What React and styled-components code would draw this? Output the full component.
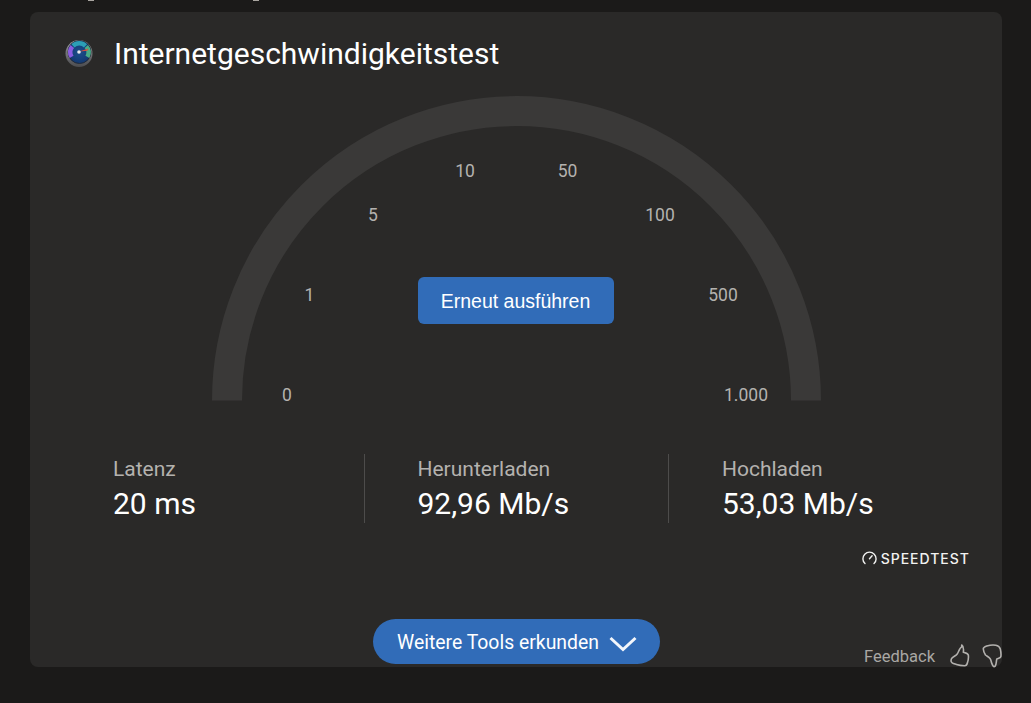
import styled, { createGlobalStyle } from "styled-components";

const GlobalStyle = createGlobalStyle`
  html, body { margin: 0; padding: 0; background: #1b1a19; }
  * { box-sizing: border-box; }
`;

const Page = styled.div`
  position: relative;
  width: 1031px;
  height: 703px;
  overflow: hidden;
  padding: 0 29px 0 30px;
  background: #1b1a19;
  font-family: Roboto, "Liberation Sans", sans-serif;
`;

const TopStrip = styled.div`
  display: flex;
  gap: 159px;
  height: 12px;
  padding-left: 58px;
`;

const Descender = styled.span`
  width: 6px;
  height: 1px;
  background: #a9a5a0;
`;

const Card = styled.section`
  display: flex;
  flex-direction: column;
  height: 655px;
  background: #2a2928;
  border-radius: 8px;
`;

const Header = styled.header`
  display: flex;
  align-items: center;
  gap: 20px;
  height: 84px;
  padding: 0 0 2px 34px;
  flex-shrink: 0;
`;

const Title = styled.h1`
  margin: 0;
  font-size: 30px;
  font-weight: 400;
  color: #fff;
`;

const Gauge = styled.div`
  position: relative;
  align-self: center;
  width: 609px;
  height: 305px;
  flex-shrink: 0;
`;

const Dial = styled.svg`
  display: block;
  width: 609px;
  height: 305px;
`;

const Tick = styled.span`
  position: absolute;
  left: ${(p) => p.$x}px;
  top: ${(p) => p.$y}px;
  transform: translate(-50%, -50%);
  font-size: 17.5px;
  color: #b4b2af;
`;

const RunButton = styled.button`
  position: absolute;
  left: 206px;
  top: 181px;
  width: 196px;
  height: 47px;
  padding: 2px 0 0;
  border: 0;
  border-radius: 6px;
  background: #316cb8;
  color: #fff;
  font-family: "Liberation Sans", Arial, sans-serif;
  font-size: 19.5px;
`;

const Stats = styled.div`
  display: grid;
  grid-template-columns: repeat(3, 304.5px);
  margin: 53px 0 0 30px;
`;

const Stat = styled.div`
  display: flex;
  flex-direction: column;
  height: 69px;
  padding: 4px 0 0 53px;
  border-right: ${(p) => (p.$last ? "0" : "1px solid #4d4c4b")};
`;

const StatLabel = styled.span`
  font-size: 21px;
  line-height: 22px;
  color: #b4b2af;
`;

const StatValue = styled.span`
  margin-top: 6px;
  font-size: 30px;
  line-height: 36px;
  color: #fff;
`;

const Brand = styled.div`
  display: flex;
  align-items: center;
  justify-content: flex-end;
  gap: 4px;
  margin-top: 27px;
  padding-right: 32px;
  height: 16px;
  color: #f2f2f1;
  font-family: Inter, "Open Sans", sans-serif;
  font-size: 14px;
  font-weight: 500;
  letter-spacing: 1px;
`;

const MoreButton = styled.button`
  display: flex;
  align-items: center;
  justify-content: center;
  gap: 10px;
  align-self: center;
  width: 287px;
  height: 45px;
  margin: auto 0 3px;
  padding: 2px 0 0 2px;
  border: 0;
  border-radius: 23px;
  background: #316cb8;
  color: #fff;
  font-family: Roboto, sans-serif;
  font-size: 19.4px;
`;

const ChevronIcon = styled.svg`
  margin-top: 2px;
`;

const Feedback = styled.div`
  position: absolute;
  right: 29px;
  bottom: 36px;
  display: flex;
  align-items: center;
  gap: 15px;
  height: 22px;
  font-size: 16.5px;
  color: #a9a7a4;
`;

const Thumbs = styled.div`
  display: flex;
  gap: 10px;
`;

const TICKS = [
  { label: "0", x: 75.5, y: 298.5 },
  { label: "1", x: 98, y: 198.5 },
  { label: "5", x: 161.5, y: 118.5 },
  { label: "10", x: 253.5, y: 74.5 },
  { label: "50", x: 356, y: 74.5 },
  { label: "100", x: 448.5, y: 118.5 },
  { label: "500", x: 511.5, y: 198.5 },
  { label: "1.000", x: 534.5, y: 298.5 },
];

const STATS = [
  { label: "Latenz", value: "20 ms" },
  { label: "Herunterladen", value: "92,96 Mb/s" },
  { label: "Hochladen", value: "53,03 Mb/s" },
];

function SpeedIcon() {
  return (
    <svg width="30" height="30" viewBox="0 0 30 30" fill="none">
      <defs>
        <radialGradient id="dialFace" cx="50%" cy="50%" r="55%">
          <stop offset="0%" stopColor="#1c4f8c" />
          <stop offset="100%" stopColor="#12366e" />
        </radialGradient>
        <linearGradient id="dialRim" x1="0" y1="0" x2="0" y2="1">
          <stop offset="0%" stopColor="#9a9da1" />
          <stop offset="100%" stopColor="#4b4b4e" />
        </linearGradient>
      </defs>
      <circle cx="15" cy="15.500" r="13.500" fill="url(#dialRim)" />
      <circle cx="15.500" cy="14" r="11.500" fill="url(#dialFace)" stroke="#23262b" strokeWidth="0.8" />
      <path d="M7.600 18.800A9 9 0 0 1 8.300 8.500" stroke="#8a5ce0" strokeWidth="4.500" />
      <path d="M9 7.800A9 9 0 0 1 21.500 7.800" stroke="#2c9fb6" strokeWidth="4.500" />
      <path d="M22.300 8.500A9 9 0 0 1 23.400 18.800" stroke="#4aad86" strokeWidth="4.500" />
      <path d="M15 13.500l9.500-3-1 2.300z" fill="#d9533f" />
      <circle cx="15" cy="14" r="1.800" fill="#e7e9ec" />
    </svg>
  );
}

function SpeedtestMark() {
  return (
    <svg width="15" height="14" viewBox="0 0 15 14" fill="none" stroke="#f2f2f1" strokeWidth="1.4" strokeLinecap="round">
      <path d="M3 12.600a6.600 6.600 0 1 1 9 0" />
      <path d="M7.500 7.800l2.600-3" />
    </svg>
  );
}

function Chevron() {
  return (
    <ChevronIcon width="28" height="16" viewBox="0 0 28 16" fill="none" stroke="#f3f6fb" strokeWidth="3">
      <path d="M1.500 2l12.500 11.500L26.500 2" />
    </ChevronIcon>
  );
}

function ThumbUp() {
  return (
    <svg width="22" height="24" viewBox="0 0 22 24" fill="none" stroke="#b3b1ae" strokeWidth="1.600" strokeLinejoin="round">
      <path d="M11.700 1c1.600 1 2 4.600 1.600 7.300c2.200.6 4.700 1 5 2.700c.4 2.400-.1 5.300-.8 7.500c-.5 2.300-1.500 3.300-3 3.200c-2.700 0-5.500-.3-8-1.200c-2.300-.8-4.900-1.200-5.300-2.900c-.4-1.400.1-2.800 1-3.800c1.700-1.500 3.700-2.100 5-3.800c1.400-1.800 2.400-6.500 4.500-7z" />
    </svg>
  );
}

function ThumbDown() {
  return (
    <svg width="20" height="24" viewBox="0 0 20 24" fill="none" stroke="#b3b1ae" strokeWidth="1.600" strokeLinejoin="round">
      <path d="M1.300 5c-.2-1.600 1.700-2.300 3.500-3c2.800-.9 6.400-1.300 9-.8c2.500.5 3.900 1.700 4.500 3.800c.6 2.600.9 5.700.5 7.800c-.4 1.400-2.300 1.500-4 2.200c-.7 2.200-.2 5.800-1.800 7.400c-1.600 1-2.400-1-3.200-3c-.7-1.800-.7-3.600-1.800-4.900c-1.500-1.700-3.200-2.300-4.500-3.500c-1-1.700-2.100-3.600-2.200-6z" />
    </svg>
  );
}

export default function App() {
  return (
    <>
      <GlobalStyle />
      <Page>
        <TopStrip>
          <Descender />
          <Descender />
        </TopStrip>
        <Card>
          <Header>
            <SpeedIcon />
            <Title>Internetgeschwindigkeitstest</Title>
          </Header>
          <Gauge>
            <Dial viewBox="0 0 609 305">
              <path d="M15 304.500A289.500 289.500 0 0 1 594 304.500" fill="none" stroke="#3a3938" strokeWidth="30" />
            </Dial>
            {TICKS.map((t) => (
              <Tick key={t.label} $x={t.x} $y={t.y}>{t.label}</Tick>
            ))}
            <RunButton>Erneut ausführen</RunButton>
          </Gauge>
          <Stats>
            {STATS.map((s, i) => (
              <Stat key={s.label} $last={i === STATS.length - 1}>
                <StatLabel>{s.label}</StatLabel>
                <StatValue>{s.value}</StatValue>
              </Stat>
            ))}
          </Stats>
          <Brand>
            <SpeedtestMark />
            SPEEDTEST
          </Brand>
          <MoreButton>
            Weitere Tools erkunden
            <Chevron />
          </MoreButton>
        </Card>
        <Feedback>
          Feedback
          <Thumbs>
            <ThumbUp />
            <ThumbDown />
          </Thumbs>
        </Feedback>
      </Page>
    </>
  );
}
